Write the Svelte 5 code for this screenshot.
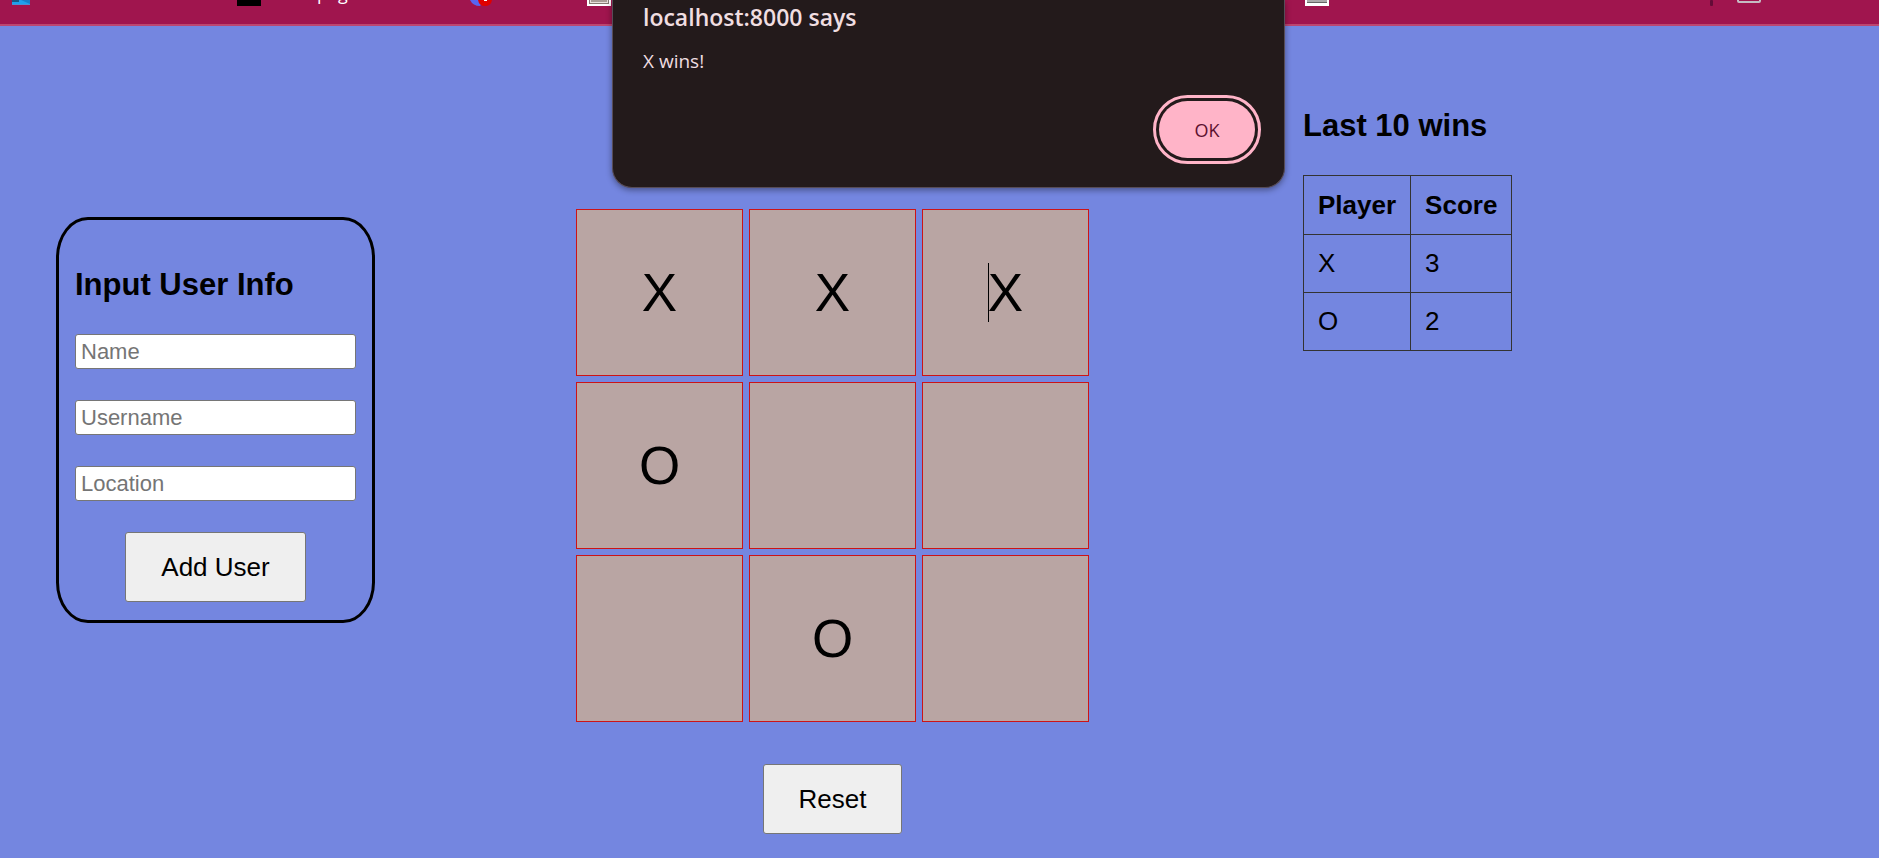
<script>
  const size = 9;
  let board = $state(['X', 'X', 'X', 'O', '', '', '', 'O', '']);
  let wins = $state([
    { player: 'X', score: 3 },
    { player: 'O', score: 2 }
  ]);
  let message = $state('X wins!');
  let active = $state(2);

  function play(i) {
    if (board[i]) return;
    const marks = board.filter(Boolean).length;
    board[i] = marks % 2 ? 'O' : 'X';
    active = i;
  }

  function reset() {
    board = Array(size).fill('');
    active = -1;
  }
</script>

<header class="bar">
  <svg class="tab-a" width="18" height="5" viewBox="0 0 18 5" aria-hidden="true">
    <rect width="18" height="5" fill="#1ea0ee" />
    <path d="M0 0h7v2H0z" fill="#155a86" />
    <path d="M9 0h9v4z" fill="#1580cc" />
    <path d="M0 4h18v1H0z" fill="#4b8fd4" />
  </svg>
  <svg class="tab-b" width="24" height="6" viewBox="0 0 24 6" aria-hidden="true">
    <rect width="24" height="6" fill="#000" />
  </svg>
  <span class="tab-text">page</span>
  <svg class="tab-c" width="23" height="6" viewBox="0 0 23 6" aria-hidden="true">
    <path d="M0 0Q3 6 10 6L15 0z" fill="#5865f2" />
    <path d="M8 0Q9 6 15 6T22 0z" fill="#e00000" />
    <path d="M14 0h3v1h-3z" fill="#fff" />
  </svg>
  <svg class="tab-d" width="24" height="6" viewBox="0 0 24 6" aria-hidden="true">
    <rect width="24" height="6" fill="#fff" />
    <path d="M2 0h20v4H2z" fill="#857b72" />
    <path d="M3 0h18v3H3z" fill="#e8e2dc" />
    <path d="M4 0h16v2H4z" fill="#a89f96" />
  </svg>
  <svg class="tab-e" width="24" height="6" viewBox="0 0 24 6" aria-hidden="true">
    <rect width="24" height="6" fill="#fff" />
    <path d="M2 0h20v2H2z" fill="#aaa" />
    <path d="M2 2h20v1H2z" fill="#666" />
  </svg>
  <svg class="tab-f" width="3" height="6" viewBox="0 0 3 6" aria-hidden="true">
    <rect width="3" height="6" rx="1" fill="#640b37" />
  </svg>
  <svg class="tab-g" width="24" height="3" viewBox="0 0 24 3" aria-hidden="true">
    <path d="M1 0v1q0 1 1 1h20q1 0 1-1V0" fill="none" stroke="#c5bcc3" stroke-width="2" />
  </svg>
</header>

<main>
  <form class="card" onsubmit={(e) => e.preventDefault()}>
    <h2>Input User Info</h2>
    <input type="text" placeholder="Name" aria-label="Name" />
    <input type="text" placeholder="Username" aria-label="Username" />
    <input type="text" placeholder="Location" aria-label="Location" />
    <button class="action" type="submit">Add User</button>
  </form>

  <section class="game">
    <div class="board">
      {#each board as mark, i}
        <button class="cell" aria-label={`Square ${i + 1} ${mark}`} onclick={() => play(i)}>
          <span class:caret={i === active}>{mark}</span>
        </button>
      {/each}
    </div>
    <button class="action" type="button" onclick={reset}>Reset</button>
  </section>

  <section class="scores">
    <h2>Last 10 wins</h2>
    <table>
      <thead>
        <tr><th>Player</th><th>Score</th></tr>
      </thead>
      <tbody>
        {#each wins as w}
          <tr><td>{w.player}</td><td>{w.score}</td></tr>
        {/each}
      </tbody>
    </table>
  </section>
</main>

{#if message}
  <div class="dialog" role="alertdialog" aria-labelledby="dialog-title">
    <h1 id="dialog-title">localhost:8000 says</h1>
    <p>{message}</p>
    <button class="ok" onclick={() => (message = '')}>OK</button>
  </div>
{/if}

<style>
  :global(body) {
    background: #7486e0;
    color: #000;
    font-family: 'Liberation Sans', Arial, sans-serif;
    font-size: 26px;
  }

  .bar {
    display: flex;
    align-items: flex-start;
    height: 24px;
    overflow: hidden;
    background: #a0154e;
    border-bottom: 2px solid #bc466f;
  }
  .bar svg {
    display: block;
    flex: none;
  }
  .tab-a { margin-left: 12px; }
  .tab-b { margin-left: 207px; }
  .tab-text {
    width: 152px;
    margin: -19px 0 0 56px;
    color: #fff;
    font: 18px/24px 'Open Sans', sans-serif;
  }
  .tab-c { margin-left: 1px; }
  .tab-d { margin-left: 94px; }
  .tab-e { margin-left: 694px; }
  .tab-f { margin-left: 381px; }
  .tab-g { margin-left: 24px; }

  main {
    display: grid;
    grid-template-columns: 520fr 727fr 576fr;
    align-items: start;
    padding-left: 56px;
  }

  h2 {
    margin: 0;
    font-size: 31px;
    line-height: 37px;
  }

  .card {
    display: flex;
    flex-direction: column;
    gap: 31px;
    box-sizing: border-box;
    width: 319px;
    margin-top: 191px;
    padding: 46px 16px 18px;
    border: 3px solid #000;
    border-radius: 10%;
  }
  .card input {
    box-sizing: border-box;
    width: 100%;
    height: 35px;
    padding: 0 5px;
    border: 1px solid #767676;
    border-radius: 3px;
    background: #fff;
    font: 22px 'Liberation Sans', Arial, sans-serif;
  }
  .card input::placeholder {
    color: #757575;
  }

  .action {
    align-self: center;
    height: 70px;
    padding: 0 35px;
    border: 1px solid #767676;
    border-radius: 3px;
    background: #efefef;
    color: #000;
    font: 26px 'Liberation Sans', Arial, sans-serif;
  }

  .game {
    display: flex;
    flex-direction: column;
    gap: 42px;
    width: 513px;
    margin-top: 183px;
  }
  .board {
    display: grid;
    grid-template-columns: repeat(3, 1fr);
    grid-auto-rows: 167px;
    gap: 6px;
  }
  .cell {
    padding: 0;
    border: 1px solid #cc1417;
    background: #b9a5a3;
    color: #000;
    font: 53px 'Liberation Sans', Arial, sans-serif;
  }
  .caret {
    box-shadow: inset 1px 0 #000;
  }

  .scores {
    margin-top: 81px;
  }
  table {
    margin-top: 31px;
    border-collapse: collapse;
  }
  th,
  td {
    padding: 13px 14px;
    border: 1px solid #333;
    line-height: 31px;
    text-align: left;
  }
  th {
    line-height: 32px;
  }

  .dialog {
    position: absolute;
    top: 0;
    left: 612px;
    display: flex;
    flex-direction: column;
    box-sizing: border-box;
    width: 673px;
    height: 188px;
    padding: 1px 29px 29px 30px;
    border: 1px solid #574c58;
    border-top: 0;
    border-radius: 0 0 20px 20px;
    background: #231a1b;
    box-shadow: 0 2px 6px rgb(0 0 0 / 40%);
    color: #f0dee1;
    font-family: 'Open Sans', 'Noto Sans', sans-serif;
  }
  .dialog h1 {
    margin: 0;
    font-size: 23px;
    font-weight: 600;
    line-height: 32px;
  }
  .dialog p {
    margin: 14px 0 0;
    font-size: 19px;
    line-height: 28px;
  }
  .ok {
    align-self: flex-end;
    width: 96px;
    height: 57px;
    margin-top: auto;
    border: 0;
    border-radius: 29px;
    outline: 3px solid #ffb4c8;
    outline-offset: 3px;
    background: #ffb4c8;
    color: #5c1130;
    font: 500 18px 'Open Sans', 'Noto Sans', sans-serif;
  }
</style>
